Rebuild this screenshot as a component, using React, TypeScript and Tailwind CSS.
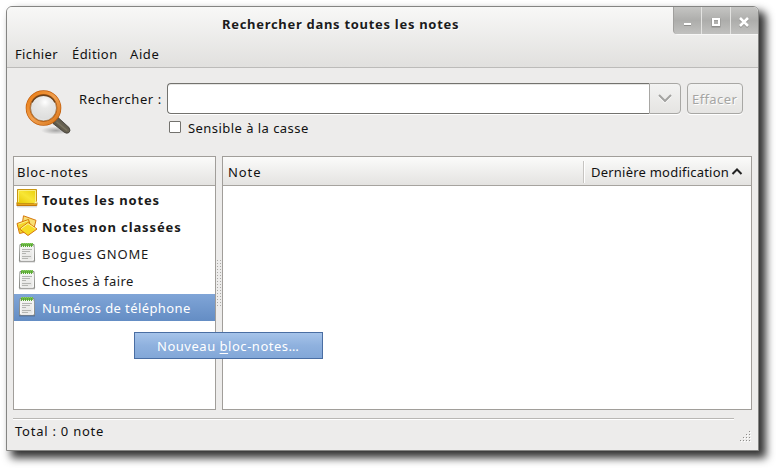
import type { ReactNode } from "react";

function Magnifier() {
  return (
    <svg width="50" height="50" viewBox="0 0 50 50" className="block">
      <defs>
        <linearGradient id="ring" x1="0" y1="0" x2="1" y2="1">
          <stop offset="0" stopColor="#e87a10" />
          <stop offset=".5" stopColor="#f0a050" />
          <stop offset="1" stopColor="#d9761a" />
        </linearGradient>
        <radialGradient id="glass" cx=".55" cy=".3" r=".7">
          <stop offset="0" stopColor="#ffffff" />
          <stop offset=".3" stopColor="#e9e9e8" />
          <stop offset=".8" stopColor="#dededd" />
          <stop offset="1" stopColor="#efefef" />
        </radialGradient>
        <linearGradient id="handle" x1="0" y1="1" x2="1" y2="0">
          <stop offset="0" stopColor="#33312b" />
          <stop offset=".5" stopColor="#6c6655" />
          <stop offset="1" stopColor="#38362f" />
        </linearGradient>
        <radialGradient id="ground">
          <stop offset="0" stopColor="#000" stopOpacity=".3" />
          <stop offset="1" stopColor="#000" stopOpacity="0" />
        </radialGradient>
      </defs>
      <ellipse cx="34" cy="45.500" rx="15" ry="4" fill="url(#ground)" />
      <path d="M31 36.500 35.500 32 47 42.500Q49 45.500 47 47.500 45 49 42.500 47.500L31 38.500Z" fill="url(#handle)" stroke="#3c3932" strokeWidth=".8" />
      <path d="m34.500 37 10.500 8.500" stroke="#8d866f" strokeWidth="1.300" opacity=".5" />
      <circle cx="21.500" cy="23" r="14.500" fill="url(#glass)" />
      <circle cx="21.500" cy="23" r="15.400" fill="none" stroke="#c25c08" strokeWidth="4.800" />
      <circle cx="21.500" cy="23" r="15.500" fill="none" stroke="url(#ring)" strokeWidth="3.200" />
      <circle cx="21.500" cy="23" r="13" fill="none" stroke="#a0703c" strokeWidth=".8" />
      <path d="M10 17.500a12.800 12.800 0 0 1 23 0" fill="none" stroke="#6b431d" strokeWidth="1.400" />
    </svg>
  );
}

function AllNotesIcon() {
  return (
    <svg width="22" height="20" viewBox="0 0 22 20" className="block">
      <defs>
        <linearGradient id="sheet" x1="1" y1="0" x2="0" y2="1">
          <stop offset="0" stopColor="#e8cd05" />
          <stop offset=".5" stopColor="#f8e636" />
          <stop offset="1" stopColor="#e6c600" />
        </linearGradient>
      </defs>
      <path d="M1 18.800h20" stroke="#000" strokeOpacity=".2" />
      <path d="M1.500 2v12L.800 17.500h20v-2L20 13Z" fill="#e8a51c" stroke="#c27808" />
      <path d="M1.500 1.500h19V13.500l.500 2H.800l.700-2Z" fill="url(#sheet)" stroke="#c99613" />
      <path d="M2.500 14V2.500h17V13" fill="none" stroke="#fdf29b" strokeOpacity=".8" />
      <path d="M17.500 15.300q2.500-.3 2.500-2.800l1 2.800Z" fill="#fffbd5" />
    </svg>
  );
}

function UnfiledIcon() {
  return (
    <svg width="22" height="22" viewBox="0 0 22 22" className="block">
      <g stroke="#d6780f" strokeLinejoin="round">
        <path d="m7.500 .800 12.500 4.500-2 8-12-3Z" fill="#f8df74" />
        <path d="m1 8.500 11.500-4 3.500 11L3.500 18.500Z" fill="#f4d52a" />
        <path d="m3.500 14 8.500-6.500 9 6.500-9 6.500Z" fill="#f6dc25" />
      </g>
      <path d="m5 13.700 7-5 7.500 5" fill="none" stroke="#fff3a0" />
      <path d="m2.500 9.200 9.500-3.400" fill="none" stroke="#fff3a0" strokeOpacity=".8" />
    </svg>
  );
}

function NotebookIcon() {
  return (
    <svg width="18" height="21" viewBox="0 0 18 21" className="block">
      <defs>
        <linearGradient id="page" x1="0" y1="0" x2="0" y2="1">
          <stop offset="0" stopColor="#f5f5f4" />
          <stop offset="1" stopColor="#e4e4e2" />
        </linearGradient>
      </defs>
      <path d="M1 19.700h16" stroke="#000" strokeOpacity=".25" strokeWidth="1.400" />
      <path d="M2 2.500h14l.6 16.500H1.400Z" fill="url(#page)" stroke="#8b8c88" />
      <path d="M2.800 5v13.200h12.400V5" fill="none" stroke="#fff" />
      <path d="M3 1h12v3H3z" fill="#74bd4c" />
      <path d="M3.500 1v4M5.500 1v4M7.500 1v4M9.500 1v4M11.500 1v4M13.500 1v4" stroke="#57a632" />
      <path d="M3 1.500h12" stroke="#8fd06c" strokeDasharray="1 1" />
      <path d="M4 7.500h10M4 9.500h8M4 11.500h4M4 14.500h9M4 16.500h6" stroke="#b4b5b2" />
    </svg>
  );
}

function WindowButton({ children, first }: { children: ReactNode; first?: boolean }) {
  return (
    <div
      className={
        "flex h-[27px] items-center justify-center bg-linear-to-b from-[#c5c5c3] via-[#adadab] to-[#c1c1bf] " +
        (first ? "w-[28px] rounded-bl-[4px] border-l border-[#a09f9d]" : "w-[29px] border-l border-[#e3e3e1] last:w-[28px]")
      }
    >
      {children}
    </div>
  );
}

function Header({ children }: { children: ReactNode }) {
  return (
    <div className="flex h-[29px] shrink-0 border-b border-[#a6a39f] bg-linear-to-b from-[#fbfbfa] to-[#e4e3e1] pt-[5px]">
      {children}
    </div>
  );
}

function Row({ icon, children, selected }: { icon: ReactNode; children: ReactNode; selected?: boolean }) {
  return (
    <div
      className={
        "flex h-[27px] " +
        (selected ? "bg-linear-to-b from-[#80a5d7] to-[#648dc4] text-white" : "text-[#1a1a1a]")
      }
    >
      <div className="flex w-[26px] shrink-0 justify-center pt-[2px]">{icon}</div>
      <div className="pt-1 pl-[2px]">{children}</div>
    </div>
  );
}

export default function App() {
  return (
    <div className="h-[471px] w-[779px] overflow-hidden bg-white pt-[6px] pl-[6px] font-['Noto_Sans','Open_Sans',sans-serif] text-[13px] leading-5 whitespace-nowrap text-[#111111]">
      <div className="relative flex h-[445px] w-[753px] flex-col rounded-t-[6px] border border-[#858583] bg-[#edeceb] shadow-[6px_6px_9px_1px_rgba(0,0,0,0.8)]">
        <div className="flex h-[61px] shrink-0 flex-col overflow-hidden rounded-t-[5px] border-b border-[#bcbbb9] bg-linear-to-b from-[#f8f8f7] to-[#e1e0de]">
          <div className="flex h-[37px] shrink-0 justify-between">
            <div className="pt-[7px] pl-[215px] font-bold tracking-[0.7px] text-[#1c1c1c] [text-shadow:1px_1px_0_white]">
              Rechercher dans toutes les notes
            </div>
            <div className="flex h-[28px] rounded-bl-[5px] border-b border-[#f7f7f6]">
              <WindowButton first>
                <svg width="9" height="10" className="mt-[3px] mr-px block"><path d="M1 7.500h7" stroke="#8f8f8d" strokeWidth="3" /><path d="M1 7h7" stroke="white" strokeWidth="2" /></svg>
              </WindowButton>
              <WindowButton>
                <svg width="10" height="11" className="mt-[3px] mr-px block"><path d="M1.500 2.500h7v7h-7z" fill="none" stroke="#8f8f8d" strokeWidth="2" /><path d="M2 2h6v6h-6z" fill="none" stroke="white" strokeWidth="2" /></svg>
              </WindowButton>
              <WindowButton>
                <svg width="10" height="11" className="mt-[3px] mr-px block"><path d="m1 2 8 8m0-8-8 8" stroke="#8f8f8d" strokeWidth="2.500" /><path d="m1 1 8 8m0-8-8 8" stroke="white" strokeWidth="2.500" /></svg>
              </WindowButton>
            </div>
          </div>
          <div className="flex">
            <span className="ml-[8px] w-[57px] tracking-[0.35px]">Fichier</span>
            <span className="w-[58px] tracking-[0.45px]">Édition</span>
            <span className="tracking-[0.6px]">Aide</span>
          </div>
        </div>

        <div className="flex h-[88px] shrink-0">
          <div className="pt-[17px] pl-[15px]">
            <Magnifier />
          </div>
          <div className="w-[95px] pt-[21px] pl-[7px] tracking-[0.56px]">Rechercher :</div>
          <div className="flex flex-col pt-[15px]">
            <div className="flex h-[31px]">
              <div className="w-[482px] rounded-l-[4px] border border-r-0 border-[#73726e] bg-white shadow-[inset_0_1px_0_#e6e6e4,0_1px_0_white]" />
              <div className="flex w-[32px] items-center justify-center rounded-r-[4px] border border-[#a8a7a4] bg-linear-to-b from-[#f3f3f2] to-[#e5e4e2] shadow-[0_1px_0_white]">
                <svg width="16" height="10" className="block"><path d="m2 2 6 6 6-6" fill="none" stroke="white" strokeWidth="2" /><path d="m2 1 6 6 6-6" fill="none" stroke="#a3a3a1" strokeWidth="2" /></svg>
              </div>
              <div className="ml-[6px] w-[56px] rounded-[4px] border border-[#a8a7a4] bg-linear-to-b from-[#f3f3f2] to-[#e5e4e2] pt-[5px] pl-[4px] tracking-[0.4px] text-[#a5a5a3] shadow-[0_1px_0_white] [text-shadow:1px_1px_0_white]">
                Effacer
              </div>
            </div>
            <div className="flex pt-1">
              <div className="mt-[3px] ml-[2px] size-[12px] rounded-[1px] border border-[#73726e] bg-white" />
              <div className="ml-[7px] tracking-[0.45px]">Sensible à la casse</div>
            </div>
          </div>
        </div>

        <div className="flex h-[254px] shrink-0 pl-[6px]">
          <div className="flex w-[203px] flex-col border border-[#a19e9a] bg-white">
            <Header>
              <span className="pl-[3px] tracking-[0.72px]">Bloc-notes</span>
            </Header>
            <Row icon={<AllNotesIcon />}><b className="tracking-[0.84px]">Toutes les notes</b></Row>
            <Row icon={<UnfiledIcon />}><b className="tracking-[0.87px]">Notes non classées</b></Row>
            <Row icon={<NotebookIcon />}><span className="tracking-[0.76px]">Bogues GNOME</span></Row>
            <Row icon={<NotebookIcon />}><span className="tracking-[0.45px]">Choses à faire</span></Row>
            <Row icon={<NotebookIcon />} selected><span className="tracking-[0.4px]">Numéros de téléphone</span></Row>
          </div>
          <div className="flex w-[6px] items-center justify-center">
            <div className="h-[48px] w-[6px] bg-[radial-gradient(circle_at_1.500px_1.500px,#aaa9a6_0.7px,transparent_0.8px)] bg-size-[3px_3px]" />
          </div>
          <div className="flex w-[530px] flex-col border border-[#a19e9a] bg-white">
            <Header>
              <span className="w-[360px] pl-[5px] tracking-[0.9px]">Note</span>
              <div className="-mt-[1px] h-[22px] w-[2px] border-r border-l border-r-white border-l-[#c6c4c1]" />
              <span className="w-[143px] pl-[6px] tracking-[0.22px]">Dernière modification</span>
              <svg width="12" height="9" className="mt-[5px] ml-[3px] block"><path d="m1.500 7 4.500-4.500L10.500 7" fill="none" stroke="#222" strokeWidth="2" /></svg>
            </Header>
          </div>
        </div>

        <div className="mt-[8px] ml-[6px] h-[2px] w-[721px] shrink-0 border-t border-b border-t-[#b9b7b4] border-b-white" />
        <div className="flex justify-between pt-[1px] pr-[7px] pl-[8px]">
          <span className="tracking-[0.76px]">Total : 0 note</span>
          <svg width="12" height="12" className="mt-[9px] block">
            <path d="M10 1h1v1h-1zM7 4h1v1H7zM10 4h1v1h-1zM4 7h1v1H4zM7 7h1v1H7zM10 7h1v1h-1zM1 10h1v1H1zM4 10h1v1H4zM7 10h1v1H7zM10 10h1v1h-1z" transform="translate(1 1)" fill="white" />
            <path d="M10 1h1v1h-1zM7 4h1v1H7zM10 4h1v1h-1zM4 7h1v1H4zM7 7h1v1H7zM10 7h1v1h-1zM1 10h1v1H1zM4 10h1v1H4zM7 10h1v1H7zM10 10h1v1h-1z" fill="#8f8e8b" />
          </svg>
        </div>

        <div className="absolute top-[325px] left-[127px] h-[27px] w-[189px] border border-[#4a6ea3] bg-linear-to-b from-[#a6c4ea] via-[#8fb1de] to-[#82a7d8] pt-[3px] pl-[22px] tracking-[0.52px] text-white">
          Nouveau <span className="underline underline-offset-2">b</span>loc-notes…
        </div>
      </div>
    </div>
  );
}
